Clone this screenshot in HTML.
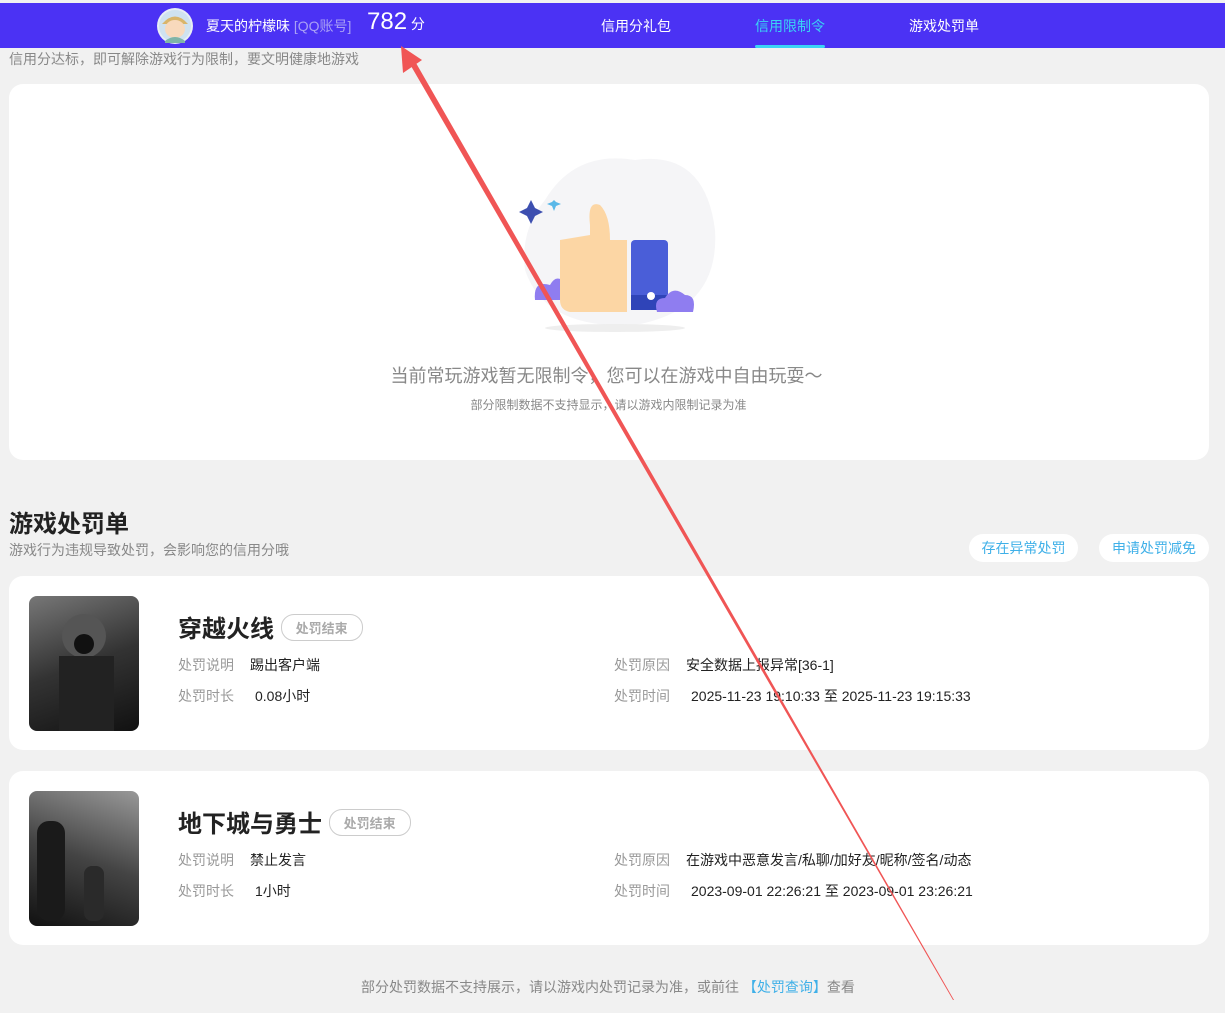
<!DOCTYPE html>
<html><head><meta charset="utf-8">
<style>
*{margin:0;padding:0;box-sizing:border-box}
body{width:1225px;height:1013px;background:#f1f1f1;font-family:"Liberation Sans","Noto Sans CJK SC",sans-serif;position:relative;overflow:hidden;color:#222}
.hdr{position:absolute;left:0;top:3px;width:1225px;height:45px;background:#4b32f4}
.abs{position:absolute;white-space:nowrap}
.card{position:absolute;left:9px;width:1200px;background:#fff;border-radius:14px}
.lab{color:#999;font-size:14px}
.val{color:#222;font-size:14px}
.tag{display:inline-block;border:1px solid #ccc;border-radius:13px;color:#aaa;font-size:13px;padding:3px 14px;font-weight:bold}
.btn{position:absolute;top:534px;height:28px;background:#fff;border-radius:14px;color:#3fb0e8;font-size:14px;line-height:28px;text-align:center}
</style></head><body>
<div class="hdr"></div>
<svg class="abs" style="left:156px;top:7px" width="38" height="38" viewBox="0 0 38 38"><circle cx="19" cy="19" r="18" fill="#e8eef5"/><circle cx="19" cy="19" r="16" fill="#cfe2f0"/><path d="M6 17 Q19 2 32 17 Z" fill="#d9b56a"/><ellipse cx="19" cy="22" rx="10" ry="9" fill="#f8d9bc"/><path d="M9 34 Q19 26 29 34 L29 36 L9 36Z" fill="#7fb4a8"/></svg>
<div class="abs" style="left:206px;top:16px;font-size:14px;color:#fff">夏天的柠檬味 <span style="color:#a9a0f5">[QQ账号]</span></div>
<div class="abs" style="left:367px;top:8px;font-size:24px;color:#fff">782<span style="font-size:14px"> 分</span></div>
<div class="abs" style="left:601px;top:16px;font-size:14px;color:#fff">信用分礼包</div>
<div class="abs" style="left:755px;top:16px;font-size:14px;color:#3ad4f5">信用限制令</div>
<div class="abs" style="left:755px;top:45px;width:70px;height:3px;background:#3ad4f5;border-radius:2px"></div>
<div class="abs" style="left:909px;top:16px;font-size:14px;color:#fff">游戏处罚单</div>
<div class="abs" style="left:9px;top:49px;font-size:14px;color:#888">信用分达标，即可解除游戏行为限制，要文明健康地游戏</div>

<div class="card" style="top:84px;height:376px"></div>
<svg class="abs" style="left:505px;top:140px" width="220" height="200" viewBox="0 0 220 200">
<path d="M40 60 Q70 10 130 20 Q200 10 210 90 Q215 170 130 185 Q40 190 20 130 Q15 90 40 60Z" fill="#f5f5f7"/>
<ellipse cx="110" cy="188" rx="70" ry="4" fill="#eee"/>
<path d="M22 68 L26 60 L30 68 L38 72 L30 76 L26 84 L22 76 L14 72Z" fill="#3d4fb0"/>
<path d="M49 60 L51 62 L56 64 L51 66 L49 71 L47 66 L42 64 L47 62Z" fill="#5ab8e8"/>
<path d="M30 160 Q28 140 45 145 Q52 132 62 145 Q72 148 66 160Z" fill="#8f7df0"/>
<path d="M55 100 L85 95 L85 85 Q82 60 95 65 Q105 75 105 100 L122 100 L122 172 L65 172 Q55 170 55 160Z" fill="#fcd6a4"/>
<rect x="126" y="100" width="37" height="70" rx="4" fill="#4a5ed8"/>
<rect x="126" y="155" width="37" height="15" fill="#2f44b8"/>
<circle cx="146" cy="156" r="4" fill="#fff"/>
<path d="M152 172 Q148 158 160 158 Q168 145 180 155 Q192 155 188 172Z" fill="#8f7df0"/>
</svg>
<div class="abs" style="left:-6px;width:1225px;text-align:center;top:362px;font-size:18px;color:#888">当前常玩游戏暂无限制令，您可以在游戏中自由玩耍～</div>
<div class="abs" style="left:-4px;width:1225px;text-align:center;top:396px;font-size:12px;color:#888">部分限制数据不支持显示，请以游戏内限制记录为准</div>

<div class="abs" style="left:9px;top:504px;font-size:24px;font-weight:bold;color:#222">游戏处罚单</div>
<div class="abs" style="left:9px;top:540px;font-size:14px;color:#888">游戏行为违规导致处罚，会影响您的信用分哦</div>
<div class="btn" style="left:969px;width:109px">存在异常处罚</div>
<div class="btn" style="left:1099px;width:110px">申请处罚减免</div>

<div class="card" style="top:576px;height:174px"></div>
<div class="abs" style="left:29px;top:596px;width:110px;height:135px;border-radius:8px;background:linear-gradient(160deg,#777,#333 50%,#111)"></div>
<svg class="abs" style="left:29px;top:596px" width="110" height="135"><circle cx="55" cy="40" r="22" fill="#555"/><rect x="30" y="60" width="55" height="75" fill="#222"/><circle cx="55" cy="48" r="10" fill="#111"/></svg>
<div class="abs" style="left:178px;top:609px;font-size:24px;font-weight:bold;color:#222">穿越火线 <span class="tag" style="vertical-align:4px">处罚结束</span></div>
<div class="abs lab" style="left:178px;top:655px">处罚说明</div><div class="abs val" style="left:250px;top:655px">踢出客户端</div>
<div class="abs lab" style="left:178px;top:686px">处罚时长</div><div class="abs val" style="left:255px;top:686px">0.08小时</div>
<div class="abs lab" style="left:614px;top:655px">处罚原因</div><div class="abs val" style="left:686px;top:655px">安全数据上报异常[36-1]</div>
<div class="abs lab" style="left:614px;top:686px">处罚时间</div><div class="abs val" style="left:691px;top:686px">2025-11-23 19:10:33 至 2025-11-23 19:15:33</div>

<div class="card" style="top:771px;height:174px"></div>
<div class="abs" style="left:29px;top:791px;width:110px;height:135px;border-radius:8px;background:linear-gradient(200deg,#999,#444 50%,#111)"></div>
<svg class="abs" style="left:29px;top:791px" width="110" height="135"><rect x="8" y="30" width="28" height="100" rx="12" fill="#1a1a1a"/><rect x="55" y="75" width="20" height="55" rx="8" fill="#2a2a2a"/></svg>
<div class="abs" style="left:178px;top:804px;font-size:24px;font-weight:bold;color:#222">地下城与勇士 <span class="tag" style="vertical-align:4px">处罚结束</span></div>
<div class="abs lab" style="left:178px;top:850px">处罚说明</div><div class="abs val" style="left:250px;top:850px">禁止发言</div>
<div class="abs lab" style="left:178px;top:881px">处罚时长</div><div class="abs val" style="left:255px;top:881px">1小时</div>
<div class="abs lab" style="left:614px;top:850px">处罚原因</div><div class="abs val" style="left:686px;top:850px">在游戏中恶意发言/私聊/加好友/昵称/签名/动态</div>
<div class="abs lab" style="left:614px;top:881px">处罚时间</div><div class="abs val" style="left:691px;top:881px">2023-09-01 22:26:21 至 2023-09-01 23:26:21</div>

<div class="abs" style="left:361px;top:977px;font-size:14px;color:#888">部分处罚数据不支持展示，请以游戏内处罚记录为准，或前往 <span style="color:#3fb0e8">【处罚查询】</span>查看</div>

<svg class="abs" style="left:0;top:0" width="1225" height="1013">
<polygon points="411,66 416,63 954,1000 953,1000" fill="#f05555"/>
<polygon points="401,46 422,60 403,73" fill="#f05555"/>
</svg>
</body></html>
